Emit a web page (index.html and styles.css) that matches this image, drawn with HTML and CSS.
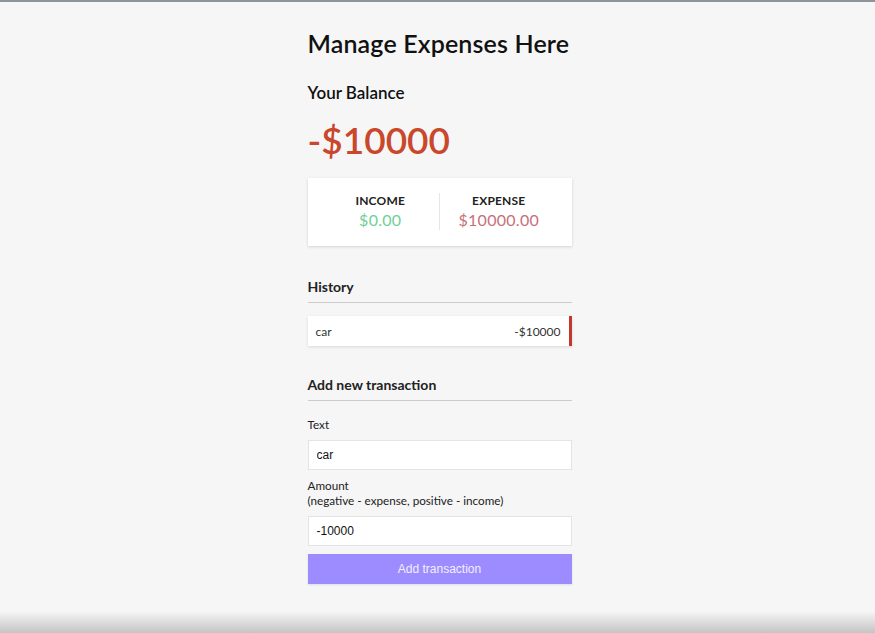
FILE: index.html
```html
<!DOCTYPE html>
<html>
<head>
<meta charset="utf-8">
<link rel="stylesheet" href="styles.css">
</head>
<body>
<div class="topline"></div>
<div class="container">
  <h2 class="title">Manage Expenses Here</h2>
  <h4 class="bal-label">Your Balance</h4>
  <h1 class="balance">-$10000</h1>
  <div class="inc-exp">
    <div class="col">
      <h4 class="col-label">INCOME</h4>
      <p class="money plus">$0.00</p>
    </div>
    <div class="col">
      <h4 class="col-label">EXPENSE</h4>
      <p class="money minus">$10000.00</p>
    </div>
  </div>
  <h3 class="section">History</h3>
  <ul class="list">
    <li class="item minus-item"><span>car</span><span>-$10000</span></li>
  </ul>
  <h3 class="section section-add">Add new transaction</h3>
  <form class="form">
    <div class="control">
      <label class="label">Text</label>
      <input class="input" type="text" value="car">
    </div>
    <div class="control">
      <label class="label">Amount<br>(negative - expense, positive - income)</label>
      <input class="input" type="text" value="-10000">
    </div>
    <button class="btn" type="button">Add transaction</button>
  </form>
</div>
<div class="bottom-fade"></div>
</body>
</html>
```
FILE: styles.css
```css
* { box-sizing: border-box; }
html, body { margin: 0; padding: 0; }
body {
  background: #f6f6f6;
  font-family: Lato, "Open Sans", sans-serif;
  color: #222;
  height: 633px;
  overflow: hidden;
  position: relative;
}
.topline { height: 2px; background: #8e959a; }
.container {
  width: 264px;
  margin: 0 auto;
  padding-top: 26px;
  display: flex;
  flex-direction: column;
  position: relative;
  left: 2px;
}
.title { margin: 0; font-size: 25px; font-weight: 600; letter-spacing: 0.15px; color: #111; line-height: 30px; }
.bal-label { margin: 24px 0 0; font-size: 17px; font-weight: 600; line-height: 22px; color: #111; }
.balance { margin: 16px 0 0; font-size: 37px; font-weight: 600; color: #c9472b; line-height: 40px; }
.inc-exp {
  margin-top: 18px;
  background: #fff;
  box-shadow: 0 1px 3px rgba(0,0,0,0.14);
  display: flex;
  justify-content: space-between;
  padding: 15px 14px 16px;
}
.col { flex: 1; text-align: center; padding: 0; }
.col:first-child { border-right: 1px solid #e6e6e6; }
.col-label { margin: 0; font-size: 12px; font-weight: 700; line-height: 15px; color: #222; letter-spacing: 0.2px; }
.money { margin: 2px 0 0; font-size: 16px; line-height: 20px; letter-spacing: 0.3px; }
.plus { color: #6fcf97; }
.minus { color: #c7707a; }
.section {
  margin: 32px 0 0;
  font-size: 14px;
  font-weight: 700;
  color: #222;
  line-height: 18px;
  padding-bottom: 6px;
  border-bottom: 1px solid #ccc;
}
.list { list-style: none; margin: 13px 0 0; padding: 0; }
.item {
  background: #fff;
  box-shadow: 0 1px 3px rgba(0,0,0,0.12);
  display: flex;
  justify-content: space-between;
  align-items: center;
  height: 30px;
  padding: 0 8px 0 8px;
  font-size: 12px;
  color: #333;
}
.minus-item { border-right: 3px solid #c0392b; }
.section-add { margin-top: 30px; }
.form { display: flex; flex-direction: column; }
.control { display: flex; flex-direction: column; }
.label { font-size: 11.7px; line-height: 15px; margin: 16px 0 8px; color: #222; }
.control + .control .label { margin-top: 8px; margin-bottom: 8px; }
.input {
  height: 30px;
  border: 1px solid #e4e4e4;
  background: #fff;
  font-family: "Liberation Sans", Arial, sans-serif;
  font-size: 12px;
  padding: 0 8px;
  color: #111;
}
.btn {
  margin-top: 8px;
  height: 30px;
  border: 0;
  background: #9c8cff;
  color: #f2efff;
  font-family: "Liberation Sans", Arial, sans-serif;
  font-size: 12px;
  box-shadow: 0 1px 2px rgba(0,0,0,0.1);
}
.bottom-fade {
  position: absolute;
  left: 0; right: 0; bottom: 0;
  height: 22px;
  background: linear-gradient(#f6f6f6, #c4c4c4);
}
```
